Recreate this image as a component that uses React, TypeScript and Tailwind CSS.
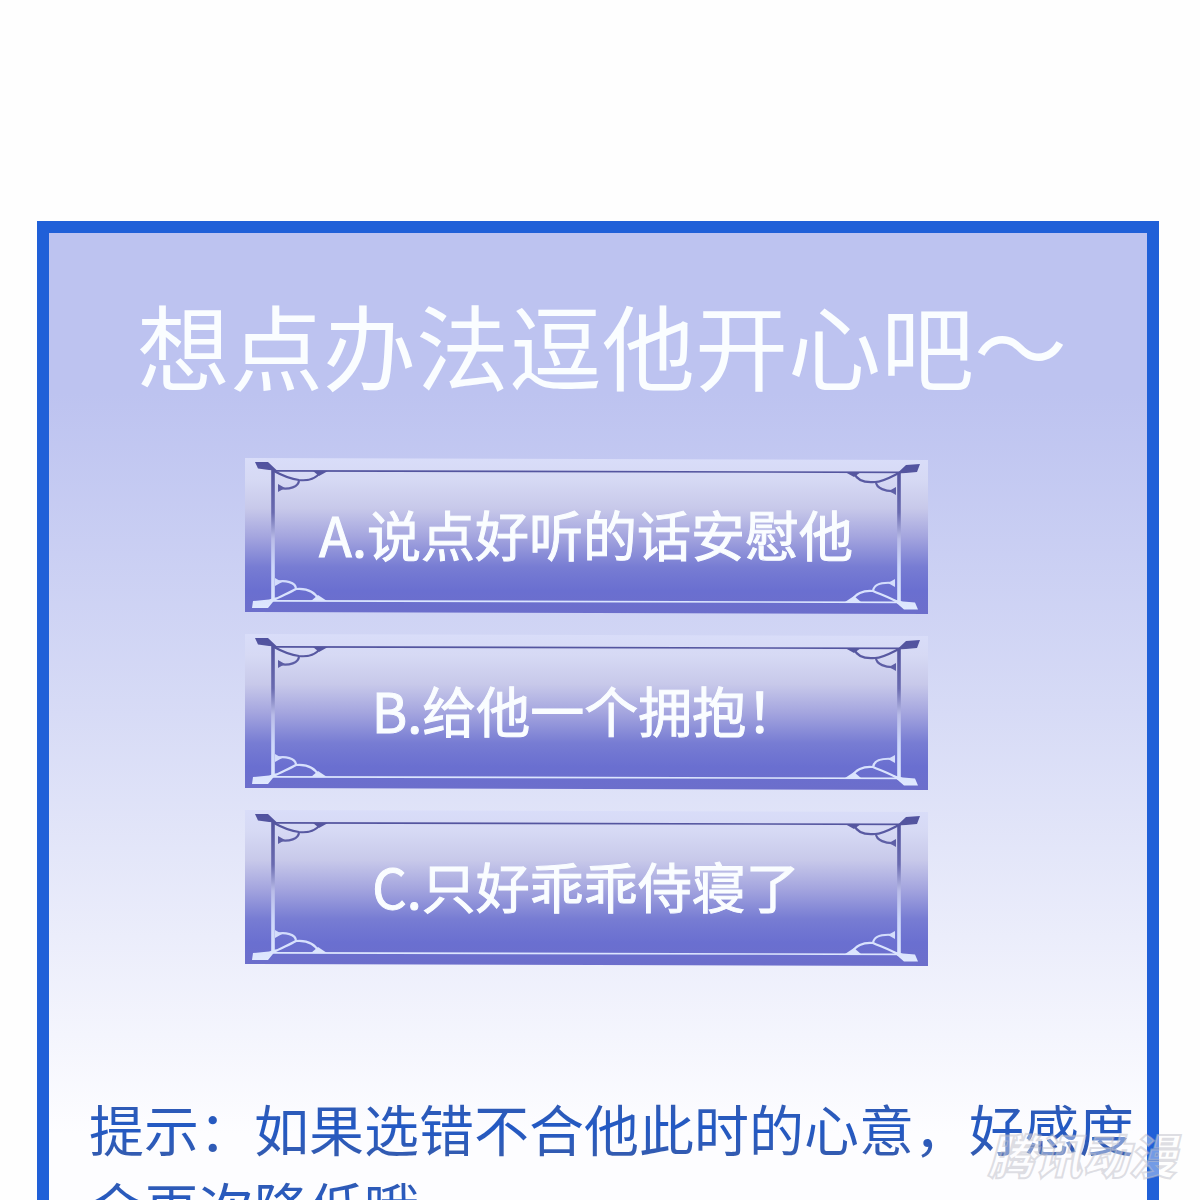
const options = [
  { id: "a", text: "A.说点好听的话安慰他" },
  { id: "b", text: "B.给他一个拥抱！" },
  { id: "c", text: "C.只好乖乖侍寝了" },
];

function OptionFrame({ id }: { id: string }) {
  const bg = `bg-${id}`;
  const ink = `ink-${id}`;

  return (
    <svg
      aria-hidden="true"
      viewBox="0 0 683 156"
      preserveAspectRatio="none"
      className="absolute inset-0 h-full w-full"
    >
      <defs>
        <linearGradient id={bg} gradientUnits="userSpaceOnUse" x1="0" y1="0" x2="0" y2="156">
          <stop offset="0" stopColor="#d9ddf9" />
          <stop offset="0.14" stopColor="#d6d9f4" />
          <stop offset="0.32" stopColor="#c8c9ea" />
          <stop offset="0.5" stopColor="#a5a6df" />
          <stop offset="0.7" stopColor="#777cd3" />
          <stop offset="0.85" stopColor="#6a6fd0" />
          <stop offset="1" stopColor="#6c6ecb" />
        </linearGradient>
        <linearGradient id={ink} gradientUnits="userSpaceOnUse" x1="0" y1="0" x2="0" y2="156">
          <stop offset="0" stopColor="#4f50a0" />
          <stop offset="0.1" stopColor="#55569f" />
          <stop offset="0.35" stopColor="#6a6bb0" />
          <stop offset="0.52" stopColor="#b9bce8" />
          <stop offset="0.7" stopColor="#ccd6fa" />
          <stop offset="1" stopColor="#e2ebff" />
        </linearGradient>
      </defs>
      <polygon points="0,0 683,2 683,156 0,154" fill={`url(#${bg})`} />

      {/* rails */}
      <g fill={`url(#${ink})`}>
        <polygon points="28,12 656,13.5 656,15.2 28,13.7" />
        <polygon points="28,142 656,143.5 656,145.2 28,143.7" />
        <rect x="26.2" y="12" width="3.6" height="131" />
        <rect x="652.2" y="14" width="3.6" height="131" />
      </g>

      {/* corner caps */}
      <g fill={`url(#${ink})`}>
        <polygon points="10,4 23,4 32,12.5 24,12 13,10.5" />
        <polygon points="652,15.5 661,7 675,6 672,14 661,15" />
        <polygon points="8,143 24,141.5 32,139 23,150 7,150" />
        <polygon points="647,141 658,143.5 670,144.5 673,151.5 659,151.5" />
        <polygon points="33,26 40,30 33,34" />
        <polygon points="651,29 644,33 651,37" />
        <polygon points="30,120 37,124 30,128" />
        <polygon points="650,121 643,125 650,129" />
        <polygon points="68,13 83,13 74,18" />
        <polygon points="600,14 616,14 609,19" />
        <polygon points="66,143 82,143 73,137" />
        <polygon points="600,144 616,144 609,138" />
      </g>

      {/* curls */}
      <g fill="none" stroke={`url(#${ink})`} strokeWidth="2.2">
        <path d="M29 13C38 18 46 21 54 22C64 23 72 20 75 14" />
        <path d="M54 22C54 29 44 32 34 30" />
        <path d="M654 15C646 19 638 24 630 24C620 25 612 22 609 15" />
        <path d="M631 24C631 30 641 34 650 33" />
        <path d="M29 142C36 138 44 135 51 131C62 130 70 134 74 142" />
        <path d="M51 131C51 124 40 122 31 124" />
        <path d="M654 145C646 140 637 137 628 133C618 132 610 136 607 143" />
        <path d="M628 133C629 126 638 124 649 125" />
      </g>
    </svg>
  );
}

export default function App() {
  return (
    <main
      lang="zh-CN"
      className="relative h-screen overflow-hidden bg-[#fefefe] pt-[221px] pr-[41px] pl-[37px] font-['Noto_Sans_CJK_SC',sans-serif]"
    >
      <section className="border-12 border-[#2060d8] bg-linear-to-b from-[#bdc3f0] from-[160px] via-[#d7dbf6] via-[480px] to-[#fdfdff] to-[900px] pb-24">
        <h1 className="pt-[49px] pl-2 text-center text-[93px] leading-[124px] text-[#fafdff]">
          想点办法逗他开心吧～
        </h1>

        <div className="mx-auto mt-[52px] flex w-full max-w-[707px] flex-col gap-5 pr-6">
          {options.map((option) => (
            <button
              key={option.id}
              type="button"
              className="relative h-[156px] w-full cursor-pointer pb-1 text-[54px] leading-[80px] text-[#fafdff] [-webkit-text-stroke:1px_#fafdff]"
            >
              <OptionFrame id={option.id} />
              <span className="relative">{option.text}</span>
            </button>
          ))}
        </div>

        <p className="mt-[122px] pl-10 text-[55px] leading-[78px]">
          <span className="bg-linear-to-b from-[#3a5ca8] via-[#2259c4] to-[#3a5ca8] bg-clip-text text-transparent">
            提示：如果选错不合他此时的心意，好感度会再次降低哦
          </span>
        </p>
      </section>

      <div className="absolute right-6 bottom-4 text-[47px] leading-[60px] font-black text-white/40 italic [-webkit-text-stroke:2px_rgb(190_190_200/0.5)]">
        腾讯动漫
      </div>
    </main>
  );
}
